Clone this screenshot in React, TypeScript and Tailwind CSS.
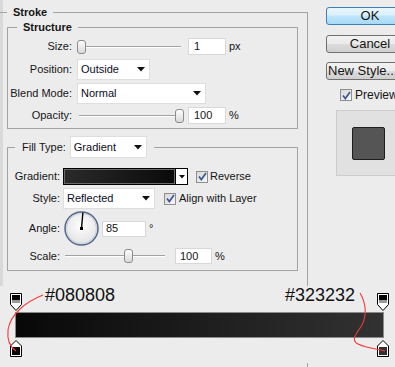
import React from "react";

const Arrow = () => (
  <svg width="8" height="5" viewBox="0 0 8 5" className="shrink-0">
    <path d="M0 0H8L4 4.5Z" fill="#111" />
  </svg>
);

function Select({ className, text }: { className: string; text: string }) {
  return (
    <div
      className={`bg-white border border-[#dedede] flex items-center justify-between pl-[3px] pr-[4px] text-[#0c0c1c] ${className}`}
    >
      <span>{text}</span>
      <Arrow />
    </div>
  );
}

function Field({ className, text }: { className: string; text: string }) {
  return (
    <div className={`bg-white border border-[#d8d8d8] flex items-center ${className}`}>{text}</div>
  );
}

function Slider({ className, thumb }: { className: string; thumb: string }) {
  return (
    <div className={`relative ${className}`}>
      <div className="absolute left-[2px] right-[2px] top-1/2 -mt-px h-[2px] border-t border-t-[#a2a2a2] border-b border-b-white" />
      <div
        className={`absolute top-1/2 -mt-[7px] w-[9px] h-[14px] rounded-[3px] border border-[#8c8c8c] bg-[linear-gradient(to_bottom,#fdfdfd,#d9d9d9)] ${thumb}`}
      />
    </div>
  );
}

const Check = () => (
  <div className="w-[12px] h-[12px] shrink-0 border border-[#8f8f8f] bg-[linear-gradient(135deg,#d6d6d6,#f8f8f8)] flex items-center justify-center">
    <svg width="9" height="9" viewBox="0 0 9 9">
      <path d="M1 4.6L3.3 7.6L8 1" fill="none" stroke="#3b5896" strokeWidth="1.7" />
    </svg>
  </div>
);

function Btn({ className, children }: { className: string; children: React.ReactNode }) {
  return (
    <div
      className={`h-[18px] w-[88px] shrink-0 rounded-[3px] border flex items-center text-[13px] leading-[16px] ${className}`}
    >
      {children}
    </div>
  );
}

const TopStop = () => (
  <svg width="12" height="18" viewBox="0 0 12 18">
    <path d="M0.5 0.5H11.5V11.5L6 17.5L0.5 11.5Z" fill="#fff" stroke="#000" />
    <rect x="2" y="2" width="8" height="5" fill="#000" />
    <rect x="2" y="7" width="8" height="3" fill="#9a9a9a" />
  </svg>
);

const BottomStop = ({ color }: { color: string }) => (
  <svg width="12" height="17" viewBox="0 0 12 17">
    <path d="M6 0.5L11.5 6V16.5H0.5V6Z" fill="#fff" stroke="#000" />
    <rect x="2" y="7" width="8" height="8" fill={color} />
  </svg>
);

export default function App() {
  return (
    <div className="w-[395px] h-[367px] overflow-hidden bg-[#ececec] text-[#151515] font-['Liberation_Sans',Arial,sans-serif] text-[11px] leading-[13px] flex flex-col">
      <div className="h-[286px] shrink-0 flex bg-[linear-gradient(to_right,#d9d9d9_0px,#d9d9d9_3px,#ececec_3px)]">
        <fieldset className="mt-[5px] w-[308px] h-[281px] shrink-0 border-t border-r border-[#a3a3a3] min-w-0">
          <legend className="ml-[7px] px-[6px] font-bold leading-[14px]">Stroke</legend>

          <fieldset className="mt-[1px] ml-[7px] w-[291px] border border-[#a3a3a3] pb-[4px] min-w-0">
            <legend className="ml-[9px] px-[6px] font-bold leading-[14px]">Structure</legend>
            <div className="mt-[4px] h-[17px] flex items-center">
              <span className="w-[64px] text-right">Size:</span>
              <Slider className="ml-[5px] w-[106px] h-[17px]" thumb="left-0" />
              <Field className="ml-[5px] w-[38px] h-[17px] pl-[5px]" text="1" />
              <span className="ml-[3px]">px</span>
            </div>
            <div className="mt-[4px] h-[21px] flex items-center">
              <span className="w-[64px] text-right">Position:</span>
              <Select className="ml-[5px] w-[73px] h-[21px]" text="Outside" />
            </div>
            <div className="mt-[3px] h-[21px] flex items-center">
              <span className="w-[64px] text-right">Blend Mode:</span>
              <Select className="ml-[5px] w-[129px] h-[21px]" text="Normal" />
            </div>
            <div className="mt-[3px] h-[17px] flex items-center">
              <span className="w-[64px] text-right">Opacity:</span>
              <Slider className="ml-[5px] w-[106px] h-[17px]" thumb="left-[98px]" />
              <Field className="ml-[5px] w-[38px] h-[17px] pl-[5px]" text="100" />
              <span className="ml-[3px]">%</span>
            </div>
          </fieldset>

          <fieldset className="mt-[7px] ml-[7px] w-[291px] border border-[#a3a3a3] pb-[6px] min-w-0">
            <legend className="ml-[7px] px-[7px]">
              <div className="flex items-center">
                <span>Fill Type:</span>
                <Select className="ml-[4px] w-[77px] h-[22px]" text="Gradient" />
              </div>
            </legend>
            <div className="mt-[10px] h-[17px] flex items-center">
              <span className="w-[52px] text-right">Gradient:</span>
              <div className="ml-[3px] flex h-[17px]">
                <div className="w-[113px] h-[17px] border border-black p-px bg-[#6a6a6a]">
                  <div className="w-full h-full bg-[linear-gradient(to_right,#2a2a2a,#0a0a0a)]" />
                </div>
                <div className="w-[12px] h-[17px] bg-white border border-black border-l-0 flex items-center justify-center">
                  <svg width="6" height="4" viewBox="0 0 6 4">
                    <path d="M0 0H6L3 3.5Z" fill="#111" />
                  </svg>
                </div>
              </div>
              <div className="ml-[8px]">
                <Check />
              </div>
              <span className="ml-[2px]">Reverse</span>
            </div>
            <div className="mt-[3px] h-[21px] flex items-center">
              <span className="w-[52px] text-right">Style:</span>
              <Select className="ml-[3px] w-[92px] h-[21px]" text="Reflected" />
              <div className="ml-[9px]">
                <Check />
              </div>
              <span className="ml-[3px]">Align with Layer</span>
            </div>
            <div className="mt-[2px] h-[35px] flex items-center">
              <span className="w-[52px] text-right">Angle:</span>
              <svg width="35" height="35" viewBox="0 0 35 35" className="ml-[4px] shrink-0">
                <defs>
                  <radialGradient id="dialg" cx="50%" cy="40%" r="60%">
                    <stop offset="0" stopColor="#ffffff" />
                    <stop offset="1" stopColor="#e2e2e2" />
                  </radialGradient>
                </defs>
                <circle cx="17.5" cy="17.5" r="16.5" fill="url(#dialg)" stroke="#56668b" strokeWidth="1.5" />
                <circle cx="17.5" cy="17.5" r="15" fill="none" stroke="#c9d0de" strokeWidth="1" />
                <line x1="17.5" y1="17.5" x2="18.9" y2="1.5" stroke="#000" strokeWidth="1.4" />
                <rect x="16" y="16" width="3" height="3" fill="#000" />
              </svg>
              <Field className="ml-[3px] w-[44px] h-[16px] pl-[3px]" text="85" />
              <span className="ml-[3px]">°</span>
            </div>
            <div className="mt-[2px] h-[16px] flex items-center">
              <span className="w-[52px] text-right">Scale:</span>
              <Slider className="ml-[3px] w-[104px] h-[16px]" thumb="left-[61px]" />
              <Field className="ml-[8px] w-[37px] h-[16px] pl-[4px]" text="100" />
              <span className="ml-[3px]">%</span>
            </div>
          </fieldset>
        </fieldset>

        <div className="flex-1 min-w-0 flex flex-col pl-[18px] pt-[7px]">
          <Btn className="justify-center border-[#3c7fb1] bg-[linear-gradient(to_bottom,#eaf6fd_0%,#d9f0fc_45%,#bee6fd_50%,#a7d9f5_100%)]">
            OK
          </Btn>
          <Btn className="mt-[10px] justify-center border-[#707070] bg-[linear-gradient(to_bottom,#f2f2f2_0%,#ebebeb_50%,#dddddd_50%,#cfcfcf_100%)]">
            Cancel
          </Btn>
          <Btn className="mt-[9px] justify-start pl-px border-[#707070] bg-[linear-gradient(to_bottom,#f2f2f2_0%,#ebebeb_50%,#dddddd_50%,#cfcfcf_100%)] whitespace-nowrap">
            New Style...
          </Btn>
          <div className="mt-[9px] ml-[14px] h-[12px] flex items-center whitespace-nowrap">
            <Check />
            <span className="ml-[3px] text-[12px]">Preview</span>
          </div>
          <div className="mt-[9px] ml-[10px] w-[70px] h-[66px] shrink-0 bg-[#e1e1e1] border border-[#cdcdcd] pl-[15px] pt-[16px]">
            <div className="w-[33px] h-[33px] bg-[#555555] border border-[#1e1e1e] rounded-[2px]" />
          </div>
        </div>
      </div>

      <div className="relative flex-1 flex flex-col">
        <div className="h-[18px] flex justify-between pl-[45px] pr-[40px] text-[18px] leading-[18px] text-[#111]">
          <span>#080808</span>
          <span>#323232</span>
        </div>
        <div className="mt-[8px] ml-[15px] w-[369px] h-[26px] border border-[#8a8a8a] bg-[linear-gradient(to_right,#080808,#323232)]" />

        <div className="absolute left-[10px] top-[7px]">
          <TopStop />
        </div>
        <div className="absolute left-[377px] top-[7px]">
          <TopStop />
        </div>
        <div className="absolute left-[10px] top-[54px]">
          <BottomStop color="#080808" />
        </div>
        <div className="absolute left-[377px] top-[54px]">
          <BottomStop color="#323232" />
        </div>
        <div className="absolute left-[307px] top-[77px] w-px h-[4px] bg-[#a3a3a3]" />

        <svg className="absolute left-0 top-0" width="395" height="81" viewBox="0 286 395 81">
          <path d="M43 295 C 25 302, 10 315, 8 330 C 7 340, 10 347, 16 351" fill="none" stroke="#f23a3a" strokeWidth="1.1" />
          <path
            d="M360 293 C 366 303, 367 315, 362 325 C 357 333, 350 340, 358 344 C 366 348, 377 349, 385 351"
            fill="none"
            stroke="#f23a3a"
            strokeWidth="1.1"
          />
        </svg>
      </div>
    </div>
  );
}
